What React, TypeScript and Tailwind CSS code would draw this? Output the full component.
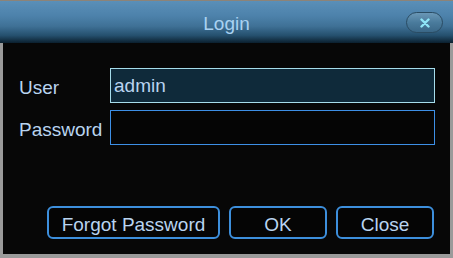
import React from "react";

const font = { fontFamily: '"Liberation Sans", Arial, sans-serif' };

function Btn({ label, w }: { label: string; w: string }) {
  return (
    <div
      className={`${w} h-[33px] flex items-center justify-center rounded-[6px] border-2 border-[#3d8fdc] bg-[#050505] text-[19px] text-[#b9d4f0] leading-none pt-[3px]`}
    >
      {label}
    </div>
  );
}

export default function App() {
  return (
    <div className="w-[453px] h-[258px] flex flex-col bg-[#9a9a9a] overflow-hidden" style={font}>
      <div className="h-[43px] shrink-0 relative flex items-center justify-center border-t border-[#8c8378] bg-[linear-gradient(to_bottom,#5a8fb8_0%,#4d82ab_35%,#3f7196_60%,#25506e_82%,#0b1f2e_100%)]">
        <span className="text-[19px] text-[#a9d2f2] leading-none mt-[2px]">Login</span>
        <div className="absolute left-[406px] top-[11px] w-[37px] h-[21px] rounded-full border border-[#2a4c63] bg-[linear-gradient(to_bottom,#6a97b6_0%,#4a7b9c_50%,#3a6787_100%)] flex items-center justify-center">
          <svg width="10" height="10" viewBox="0 0 10 10">
            <path d="M1.5 1.5 L8.5 8.5 M8.5 1.5 L1.5 8.5" stroke="#8fe6f7" strokeWidth="2.4" strokeLinecap="round" />
          </svg>
        </div>
      </div>
      <div className="flex-1 mx-[3px] mb-[4px] bg-[#070707] flex flex-col pl-[16px] pr-[15px] pt-[25px] pb-[15px]">
        <div className="flex flex-col gap-[7px]">
          <div className="flex items-center h-[35px]">
            <span className="w-[91px] text-[19px] text-[#b9d4f0] leading-none mt-[3px]">User</span>
            <div className="flex-1 h-[35px] border border-[#a6dcea] bg-[#0f2a3a] flex items-center pl-[3px] text-[19px] text-[#b9d4f0] leading-none">
              admin
            </div>
          </div>
          <div className="flex items-center h-[35px]">
            <span className="w-[91px] text-[19px] text-[#b9d4f0] leading-none mt-[3px]">Password</span>
            <div className="flex-1 h-[35px] border border-[#3d8fe6] bg-[#050505]" />
          </div>
        </div>
        <div className="flex-1" />
        <div className="flex justify-end gap-[9px] pr-[1px]">
          <Btn label="Forgot Password" w="w-[173px]" />
          <Btn label="OK" w="w-[98px]" />
          <Btn label="Close" w="w-[98px]" />
        </div>
      </div>
    </div>
  );
}
